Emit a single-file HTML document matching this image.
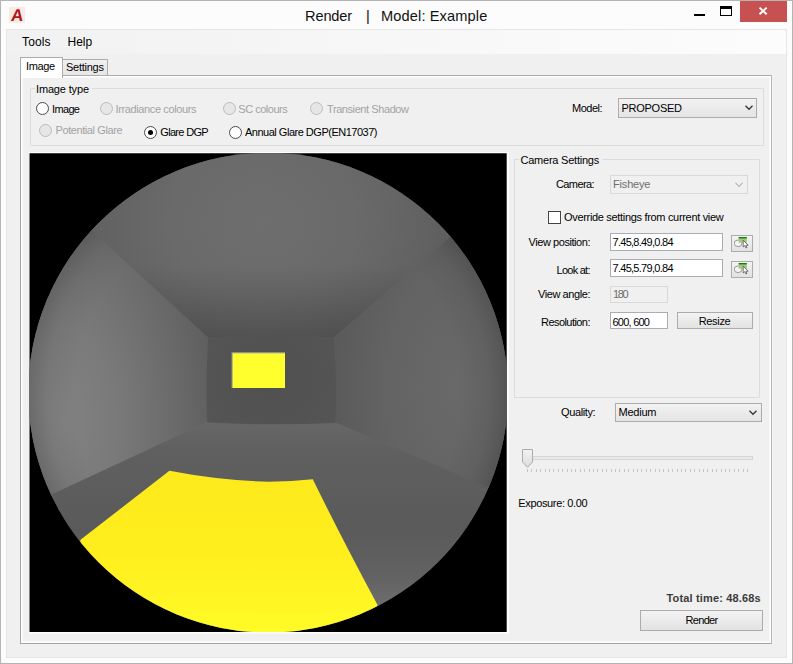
<!DOCTYPE html>
<html><head><meta charset="utf-8"><title>Render | Model: Example</title>
<style>
html,body{margin:0;padding:0;}
body{width:793px;height:664px;overflow:hidden;background:#fcfcfc;font-family:"Liberation Sans",sans-serif;font-size:11px;color:#000;}
#win{position:absolute;left:0;top:0;width:793px;height:664px;background:#fcfcfc;}
#frame{left:0;top:0;width:793px;height:664px;box-sizing:border-box;border:1px solid #b4b4b4;}
#win div,#win span,#win svg{position:absolute;}
.t{white-space:nowrap;font-size:11px;}
.dis{color:#a3a3a3;}
#client{left:6px;top:29px;width:781px;height:629px;background:#f0f0f0;box-sizing:border-box;border:1px solid #e6e6e6;}
#menubar{left:7px;top:30px;width:779px;height:24px;background:linear-gradient(90deg,#f1f1f1 0%,#f6f6f6 40%,#fcfcfc 100%);}
.gb{border:1px solid #dcdcdc;box-sizing:border-box;border-radius:1px;}
.gbl{background:#f0f0f0;}
.radio{width:13px;height:13px;box-sizing:border-box;border:1px solid #4a4a4a;border-radius:50%;background:#fff;}
.radio.d{border-color:#bcbcbc;background:#e6e6e6;}
.radio.on:after{content:"";position:absolute;left:3px;top:3px;width:5px;height:5px;border-radius:50%;background:#000;}
.combo{box-sizing:border-box;border:1px solid #acacac;background:linear-gradient(#f2f2f2,#e4e4e4);}
.combo.d{border-color:#d9d9d9;background:#f0f0f0;}
.btn{box-sizing:border-box;border:1px solid #acacac;background:linear-gradient(#f3f3f3,#e2e2e2);}
.tb{box-sizing:border-box;border:1px solid #abadb3;background:#fff;}
.tb.d{border-color:#d9d9d9;background:#f0f0f0;}
</style></head><body>
<div id="win">
<div id="frame"></div>
<!-- title bar -->
<div style="left:9px;top:7px;width:16px;height:16px;background:#fbeae4;"></div>
<span id="logo" style="left:11px;top:7px;font-weight:bold;font-size:17px;line-height:18px;color:#b5121a;transform:skewX(-7deg);">A</span>
<div style="left:694px;top:13.6px;width:11px;height:2.4px;background:#000;"></div>
<div style="left:720px;top:6px;width:12px;height:10px;box-sizing:border-box;border:1px solid #000;border-top-width:3px;"></div>
<div style="left:740px;top:1px;width:47px;height:21px;background:#c75050;"></div>
<svg style="left:758px;top:6px;" width="11" height="10" viewBox="0 0 11 10"><path d="M1.5 1.6 L8.7 8.3 M8.7 1.6 L1.5 8.3" stroke="#fff" stroke-width="1.9" fill="none"/></svg>

<div id="client"></div>
<div id="menubar"></div>

<!-- tab control -->
<div id="page" style="left:20px;top:75px;width:752px;height:569px;box-sizing:border-box;border:1px solid #a4a4a4;border-top-color:#adadad;border-right-color:#b8b8b8;border-top-right-radius:1px;background:#f0f0f0;box-shadow:inset 0 0 0 1px #fff, inset 0 0 0 2px #f8f8f8;"></div>
<div style="left:62px;top:59px;width:46px;height:16px;box-sizing:border-box;border:1px solid #acacac;border-bottom:none;background:linear-gradient(#f0f0f0,#e6e6e6);"></div>
<div style="left:20px;top:57px;width:43px;height:21px;box-sizing:border-box;border:1px solid #acacac;border-bottom:none;background:#fff;"></div>

<!-- Image type group -->
<div class="gb" style="left:30px;top:88px;width:734px;height:58px;"></div>
<div class="gbl" style="left:35px;top:84px;width:57px;height:12px;"></div>
<div class="radio" style="left:36px;top:102px;"></div>
<div class="radio d" style="left:100px;top:102px;"></div>
<div class="radio d" style="left:223px;top:102px;"></div>
<div class="radio d" style="left:310px;top:102px;"></div>
<div class="radio d" style="left:39px;top:124px;"></div>
<div class="radio on" style="left:144px;top:126px;"></div>
<div class="radio" style="left:229px;top:126px;"></div>
<div class="combo" style="left:618px;top:98px;width:139px;height:20px;"></div>
<svg style="left:745px;top:105px;" width="8" height="6" viewBox="0 0 8 6"><path d="M0.5 0.8 L4 4.3 L7.5 0.8" stroke="#333" stroke-width="1.25" fill="none"/></svg>

<!-- picture -->
<svg id="fish" style="left:28px;top:151px;" width="483" height="484" viewBox="28 151 483 484">
<defs>
<clipPath id="cc"><circle cx="268.2" cy="392.6" r="239.9"/></clipPath>
<clipPath id="cr"><rect x="29.5" y="153.2" width="477.2" height="478.7"/></clipPath>
<radialGradient id="gCeil" gradientUnits="userSpaceOnUse" cx="262" cy="222" r="175" gradientTransform="translate(262 222) scale(1.15 1) translate(-262 -222)"><stop offset="0" stop-color="#6e6e6e"/><stop offset="0.45" stop-color="#6a6a6a"/><stop offset="0.8" stop-color="#626262"/><stop offset="1" stop-color="#5c5c5c"/></radialGradient>
<linearGradient id="gCeil2" gradientUnits="userSpaceOnUse" x1="0" y1="265" x2="0" y2="338"><stop offset="0" stop-color="#000" stop-opacity="0"/><stop offset="1" stop-color="#000" stop-opacity="0.2"/></linearGradient>
<radialGradient id="gLeft" gradientUnits="userSpaceOnUse" cx="62" cy="423" r="178" gradientTransform="translate(62 423) scale(1 1.85) translate(-62 -423)"><stop offset="0" stop-color="#828282"/><stop offset="0.3" stop-color="#7a7a7a"/><stop offset="0.6" stop-color="#6c6c6c"/><stop offset="0.85" stop-color="#5f5f5f"/><stop offset="1" stop-color="#595959"/></radialGradient>
<radialGradient id="gRight" gradientUnits="userSpaceOnUse" cx="452" cy="388" r="150" gradientTransform="translate(452 388) scale(1 1.8) translate(-452 -388)"><stop offset="0" stop-color="#696969"/><stop offset="0.45" stop-color="#636363"/><stop offset="0.8" stop-color="#5a5a5a"/><stop offset="1" stop-color="#555555"/></radialGradient>
<linearGradient id="gFloor" gradientUnits="userSpaceOnUse" x1="0" y1="423" x2="0" y2="632"><stop offset="0" stop-color="#676767"/><stop offset="0.12" stop-color="#606060"/><stop offset="0.5" stop-color="#5a5a5a"/><stop offset="0.72" stop-color="#616161"/><stop offset="1" stop-color="#787878"/></linearGradient>
<linearGradient id="gYel" gradientUnits="userSpaceOnUse" x1="0" y1="470" x2="0" y2="632"><stop offset="0" stop-color="#fde91c"/><stop offset="0.5" stop-color="#ffee1e"/><stop offset="1" stop-color="#fffb26"/></linearGradient>
<radialGradient id="gBack" gradientUnits="userSpaceOnUse" cx="271" cy="380" r="80"><stop offset="0" stop-color="#505050"/><stop offset="1" stop-color="#555555"/></radialGradient>
<radialGradient id="gVig" gradientUnits="userSpaceOnUse" cx="268.2" cy="392.6" r="239.9"><stop offset="0.8" stop-color="#000" stop-opacity="0"/><stop offset="0.92" stop-color="#000" stop-opacity="0.05"/><stop offset="1" stop-color="#000" stop-opacity="0.15"/></radialGradient>
</defs>
<rect x="29" y="152" width="480" height="481.6" fill="#fff"/>
<g clip-path="url(#cr)">
<rect x="29" y="153" width="479" height="480" fill="#000"/>
<g clip-path="url(#cc)">
<circle cx="268.2" cy="392.6" r="242" fill="#626262"/>
<!-- left wall -->
<path d="M208.2 337.8 L-40 108 L-40 537.7 L207.2 422.5 Z" fill="url(#gLeft)" stroke="url(#gLeft)" stroke-width="1"/>
<!-- right wall -->
<path d="M333.7 337.8 L580 124 L580 526.7 L335.3 422.9 Z" fill="url(#gRight)" stroke="url(#gRight)" stroke-width="1"/>
<circle cx="268.2" cy="392.6" r="242" fill="url(#gVig)"/>
<!-- floor -->
<path d="M207.2 422.5 L-40 537.7 L-40 700 L580 700 L580 526.7 L335.3 422.9 Z" fill="url(#gFloor)" stroke="url(#gFloor)" stroke-width="1"/>
<!-- ceiling -->
<path id="pc" d="M208.2 337.8 L-40 108 L580 124 L333.7 337.8 Z" fill="url(#gCeil)" stroke="url(#gCeil)" stroke-width="1"/>
<path d="M208.2 337.8 L-40 108 L580 124 L333.7 337.8 Z" fill="url(#gCeil2)"/>
<!-- back wall -->
<path d="M208.2 337.8 Q271 331.5 333.7 337.8 Q337.5 380 335.3 422.9 Q271 426 207.2 422.5 Q205.5 380 208.2 337.8 Z" fill="url(#gBack)"/>
<!-- window -->
<rect x="231.5" y="352" width="53.5" height="36" fill="#8f8f96"/>
<rect x="232.6" y="353.3" width="52.4" height="34.7" fill="#ffff2e"/>
<!-- sun patch -->
<path d="M169.4 470.8 Q220 480.5 269 481.8 Q292 481.6 312.8 479.2 Q340 535 377.4 604.8 L377.4 700 L60 700 L80.5 539.8 Z" fill="url(#gYel)"/>
</g>
</g>
</svg>


<!-- Camera settings group -->
<div class="gb" style="left:514px;top:159px;width:246px;height:239px;"></div>
<div class="gbl" style="left:519px;top:154px;width:83px;height:12px;"></div>
<div class="combo d" style="left:610px;top:175px;width:138px;height:19px;"></div>
<svg style="left:735px;top:182px;" width="8" height="6" viewBox="0 0 8 6"><path d="M0.5 0.8 L4 4.3 L7.5 0.8" stroke="#b4b4b4" stroke-width="1.2" fill="none"/></svg>
<div style="left:548px;top:211px;width:13px;height:13px;box-sizing:border-box;border:1px solid #444;background:#fff;"></div>
<div class="tb" style="left:610px;top:233px;width:113px;height:18px;"></div>
<div class="tb" style="left:610px;top:259px;width:113px;height:18px;"></div>
<div class="tb d" style="left:610px;top:286px;width:58px;height:17px;"></div>
<div class="tb" style="left:610px;top:312px;width:58px;height:17px;"></div>
<div class="btn" style="left:731px;top:235px;width:22px;height:17px;"></div>
<div class="btn" style="left:731px;top:261px;width:22px;height:17px;"></div>
<svg class="pick" style="left:734px;top:236px;" width="17" height="13" viewBox="0 0 17 13"><ellipse cx="4.1" cy="7.3" rx="3.9" ry="3.3" fill="#f4f4f4" stroke="#9a9a9a" stroke-width="1"/><rect x="4.7" y="1" width="8.1" height="5.7" fill="#a6c67a"/><rect x="4.7" y="1" width="8.1" height="1.4" fill="#0e7f16"/><path d="M9.2 4.2 L9.2 11 L10.8 9.6 L11.9 12 L13 11.5 L11.9 9.2 L14.2 9.2 Z" fill="#fff" stroke="#555" stroke-width="0.8"/></svg>
<svg class="pick" style="left:734px;top:262px;" width="17" height="13" viewBox="0 0 17 13"><ellipse cx="4.1" cy="7.3" rx="3.9" ry="3.3" fill="#f4f4f4" stroke="#9a9a9a" stroke-width="1"/><rect x="4.7" y="1" width="8.1" height="5.7" fill="#a6c67a"/><rect x="4.7" y="1" width="8.1" height="1.4" fill="#0e7f16"/><path d="M9.2 4.2 L9.2 11 L10.8 9.6 L11.9 12 L13 11.5 L11.9 9.2 L14.2 9.2 Z" fill="#fff" stroke="#555" stroke-width="0.8"/></svg>
<div class="btn" style="left:677px;top:312px;width:76px;height:17px;"></div>

<!-- quality -->
<div class="combo" style="left:615px;top:403px;width:147px;height:19px;"></div>
<svg style="left:749px;top:410px;" width="8" height="6" viewBox="0 0 8 6"><path d="M0.5 0.8 L4 4.3 L7.5 0.8" stroke="#333" stroke-width="1.25" fill="none"/></svg>

<!-- slider -->
<div style="left:523px;top:456px;width:230px;height:4px;box-sizing:border-box;border:1px solid #d6d6d6;background:#e7eaea;"></div>
<div id="ticks" style="left:527px;top:469px;width:221px;height:3px;background:repeating-linear-gradient(90deg,#c4c4c4 0,#c4c4c4 1px,transparent 1px,transparent 4.4px);"></div>
<svg style="left:522px;top:449px;" width="11" height="19" viewBox="0 0 11 19"><defs><linearGradient id="thg" x1="0" y1="0" x2="0" y2="1"><stop offset="0" stop-color="#f2f2f2"/><stop offset="1" stop-color="#dcdcdc"/></linearGradient></defs><path d="M0.5 0.5 H10.5 V13 L5.5 18.3 L0.5 13 Z" fill="url(#thg)" stroke="#acacac"/></svg>

<!-- render button -->
<div class="btn" style="left:640px;top:610px;width:123px;height:21px;"></div>
<span class="t " id="t0" style="left:305px;top:6.94px;line-height:18px;letter-spacing:-0.135px;font-size:14.6px;color:#111;">Render</span>
<span class="t " id="t1" style="left:366px;top:6.94px;line-height:18px;font-size:14.6px;color:#111;">|</span>
<span class="t " id="t2" style="left:381px;top:6.94px;line-height:18px;letter-spacing:0.128px;font-size:14.6px;color:#111;">Model: Example</span>
<span class="t " id="t3" style="left:22px;top:35.14px;line-height:14px;letter-spacing:0.146px;font-size:12px;">Tools</span>
<span class="t " id="t4" style="left:67.5px;top:35.14px;line-height:14px;letter-spacing:-0.029px;font-size:12px;">Help</span>
<span class="t " id="t5" style="left:26px;top:59.69px;line-height:13px;letter-spacing:-0.370px;">Image</span>
<span class="t " id="t6" style="left:66px;top:60.69px;line-height:13px;letter-spacing:-0.264px;">Settings</span>
<span class="t " id="t7" style="left:36px;top:82.69px;line-height:13px;letter-spacing:-0.158px;">Image type</span>
<span class="t " id="t8" style="left:52px;top:102.69px;line-height:13px;letter-spacing:-0.645px;">Image</span>
<span class="t dis" id="t9" style="left:115.5px;top:102.69px;line-height:13px;letter-spacing:-0.379px;">Irradiance colours</span>
<span class="t dis" id="t10" style="left:238.3px;top:102.69px;line-height:13px;letter-spacing:-0.489px;">SC colours</span>
<span class="t dis" id="t11" style="left:327px;top:102.69px;line-height:13px;letter-spacing:-0.418px;">Transient Shadow</span>
<span class="t dis" id="t12" style="left:55.5px;top:123.69px;line-height:13px;letter-spacing:-0.412px;">Potential Glare</span>
<span class="t " id="t13" style="left:160.3px;top:125.69px;line-height:13px;letter-spacing:-0.687px;">Glare DGP</span>
<span class="t " id="t14" style="left:245px;top:125.69px;line-height:13px;letter-spacing:-0.492px;">Annual Glare DGP(EN17037)</span>
<span class="t " id="t15" style="left:572px;top:102.19px;line-height:13px;letter-spacing:-0.506px;">Model:</span>
<span class="t " id="t16" style="left:621.5px;top:102.19px;line-height:13px;letter-spacing:-0.266px;">PROPOSED</span>
<span class="t " id="t17" style="left:520.5px;top:153.69px;line-height:13px;letter-spacing:-0.231px;">Camera Settings</span>
<span class="t " id="t18" style="left:556px;top:178.19px;line-height:13px;letter-spacing:-0.615px;">Camera:</span>
<span class="t " id="t19" style="left:613px;top:178.19px;line-height:13px;letter-spacing:-0.172px;color:#6d6d6d;">Fisheye</span>
<span class="t " id="t20" style="left:564px;top:211.19px;line-height:13px;letter-spacing:-0.319px;">Override settings from current view</span>
<span class="t " id="t21" style="left:528.5px;top:235.69px;line-height:13px;letter-spacing:-0.436px;">View position:</span>
<span class="t " id="t22" style="left:612.5px;top:235.69px;line-height:13px;letter-spacing:-0.719px;">7.45,8.49,0.84</span>
<span class="t " id="t23" style="left:556.5px;top:263.69px;line-height:13px;letter-spacing:-0.734px;">Look at:</span>
<span class="t " id="t24" style="left:612.5px;top:261.69px;line-height:13px;letter-spacing:-0.719px;">7.45,5.79,0.84</span>
<span class="t " id="t25" style="left:538px;top:287.69px;line-height:13px;letter-spacing:-0.417px;">View angle:</span>
<span class="t " id="t26" style="left:613px;top:287.69px;line-height:13px;letter-spacing:-1.380px;color:#6d6d6d;">180</span>
<span class="t " id="t27" style="left:541px;top:315.69px;line-height:13px;letter-spacing:-0.555px;">Resolution:</span>
<span class="t " id="t28" style="left:612.5px;top:315.69px;line-height:13px;letter-spacing:-0.761px;">600, 600</span>
<span class="t " id="t29" style="left:698.7px;top:314.69px;line-height:13px;letter-spacing:-0.325px;">Resize</span>
<span class="t " id="t30" style="left:561px;top:405.69px;line-height:13px;letter-spacing:-0.385px;">Quality:</span>
<span class="t " id="t31" style="left:618.5px;top:405.69px;line-height:13px;letter-spacing:-0.225px;">Medium</span>
<span class="t " id="t32" style="left:518.3px;top:496.69px;line-height:13px;letter-spacing:-0.354px;">Exposure: 0.00</span>
<span class="t " id="t33" style="left:666.5px;top:591.69px;line-height:13px;letter-spacing:0.159px;font-weight:bold;color:#3c3c3c;">Total time: 48.68s</span>
<span class="t " id="t34" style="left:685.5px;top:613.69px;line-height:13px;letter-spacing:-0.676px;">Render</span>
</div>
</body></html>
